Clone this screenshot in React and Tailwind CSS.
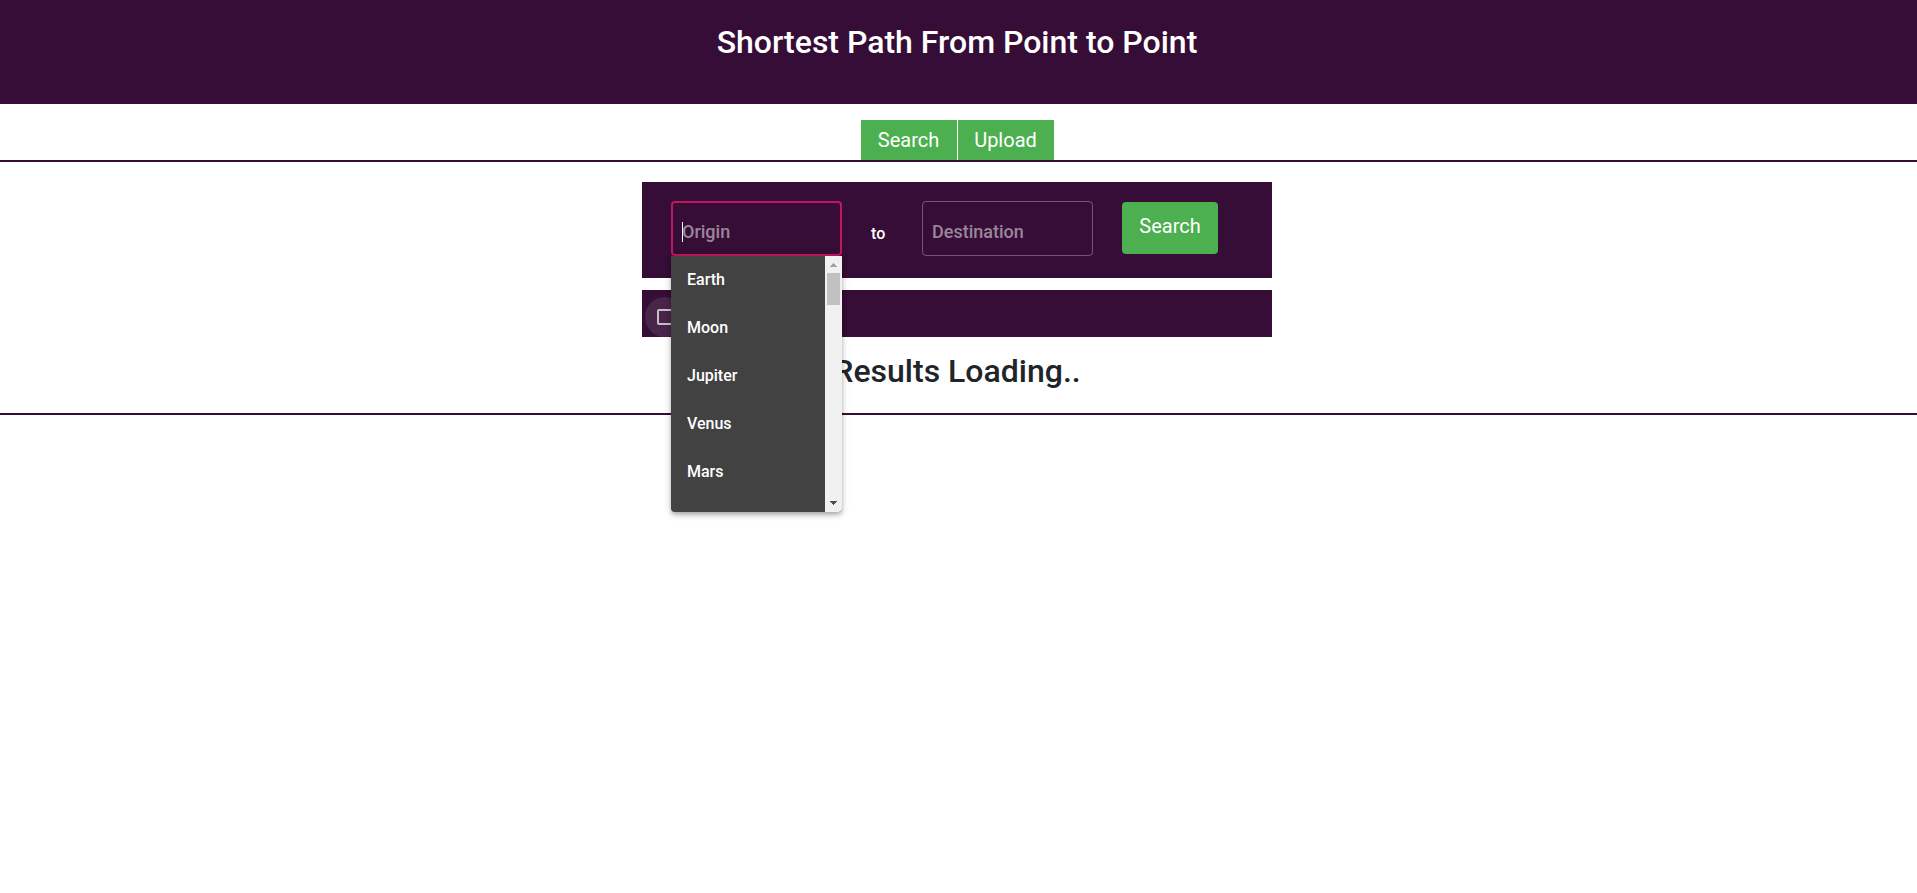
const planets = ["Earth", "Moon", "Jupiter", "Venus", "Mars"];

function Tab({ children }) {
  return (
    <button type="button" className="h-10 w-24 bg-[#4caf50] text-xl text-white">
      {children}
    </button>
  );
}

function Scrollbar() {
  return (
    <div aria-hidden="true" className="flex w-[17px] shrink-0 flex-col items-center bg-[#f1f1f1]">
      <svg className="h-[17px] w-[17px]" viewBox="0 0 17 17" shapeRendering="crispEdges">
        <path d="M8 7h1v1h1v1h1v1h1v1H5v-1h1V9h1V8h1z" fill="#a3a3a3" />
      </svg>
      <div className="h-8 w-[13px] bg-[#c1c1c1]" />
      <svg className="mt-auto h-[17px] w-[17px]" viewBox="0 0 17 17" shapeRendering="crispEdges">
        <path d="M5 6h7v1h-1v1h-1v1H9v1H8V9H7V8H6V7H5z" fill="#505050" />
      </svg>
    </div>
  );
}

function OptionMenu() {
  return (
    <div className="absolute top-full left-0 z-10 flex h-64 w-full overflow-hidden rounded-b bg-[#424242] shadow-[0_2px_4px_-1px_rgba(0,0,0,0.2),0_4px_5px_0_rgba(0,0,0,0.14),0_1px_10px_0_rgba(0,0,0,0.12)]">
      <ul role="listbox" aria-label="Origin" className="grow">
        {planets.map((name) => (
          <li
            key={name}
            role="option"
            aria-selected="false"
            className="flex h-12 items-center px-4 text-base font-medium text-white"
          >
            {name}
          </li>
        ))}
      </ul>
      <Scrollbar />
    </div>
  );
}

export default function App() {
  return (
    <div className="min-h-screen bg-white font-[Roboto,sans-serif] text-[#212529]">
      <header className="h-[104px] bg-[#350d36] pt-[22px] pr-[3px]">
        <h1 className="text-center text-[32px] leading-10 font-medium text-white">
          Shortest Path From Point to Point
        </h1>
      </header>

      <nav className="flex justify-center gap-px border-b-2 border-[#350d36] pt-4 pr-[3px]">
        <Tab>Search</Tab>
        <Tab>Upload</Tab>
      </nav>

      <main className="border-b-2 border-[#350d36] pt-5 pr-[3px] pb-5">
        <div className="mx-auto flex max-w-[630px] flex-col gap-3">
          <form className="flex h-24 items-start bg-[#350d36] pt-[19px] pl-[29px]">
            <div className="relative w-[171px]">
              <input
                type="text"
                aria-label="Origin"
                placeholder="Origin"
                className="block h-[55px] w-full rounded border-2 border-[#c2185b] bg-transparent pt-[5px] pl-[9px] text-lg font-medium text-white outline-none placeholder:text-white/50"
              />
              <span className="absolute top-[21px] left-[11px] h-5 w-px bg-white" />
              <OptionMenu />
            </div>
            <span className="w-20 pt-[21px] pl-[29px] text-base font-medium text-white">to</span>
            <input
              type="text"
              aria-label="Destination"
              placeholder="Destination"
              className="block h-[55px] w-[171px] rounded border border-white/30 bg-transparent pt-[5px] pl-[9px] text-lg font-medium text-white outline-none placeholder:text-white/50"
            />
            <button
              type="button"
              className="mt-px ml-[29px] h-[52px] w-24 rounded bg-[#4caf50] pb-1 text-xl text-white"
            >
              Search
            </button>
          </form>

          <div className="flex h-[47px] items-end bg-[#350d36] pl-[3px]">
            <label className="flex size-10 items-center justify-center rounded-full bg-white/10">
              <input
                type="checkbox"
                aria-label="Filter results"
                className="size-4 appearance-none rounded-[2px] border-2 border-white/70"
              />
            </label>
          </div>
        </div>

        <h2 className="mt-[14px] mb-[2px] text-center text-[32px] leading-10 font-medium">
          Results Loading..
        </h2>
      </main>
    </div>
  );
}
